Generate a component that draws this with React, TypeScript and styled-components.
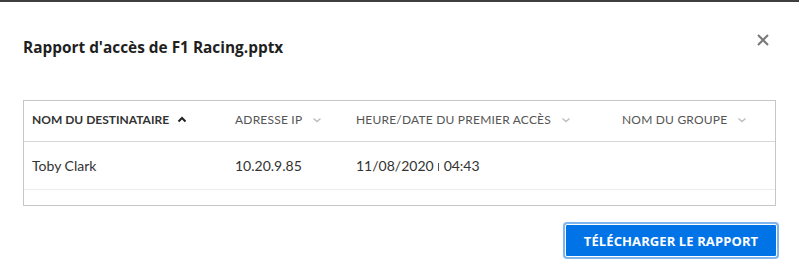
import React from 'react';
import styled, { createGlobalStyle } from 'styled-components';

const GlobalStyle = createGlobalStyle`
	html, body {
		margin: 0;
		padding: 0;
		background: #fff;
	}
	body {
		font-family: Lato, 'Liberation Sans', sans-serif;
		color: #222;
	}
`;

const Dialog = styled.div`
	width: 799px;
	height: 278px;
	box-sizing: border-box;
	border-top: 2px solid #3f3f3f;
	padding: 0 23px;
	display: flex;
	flex-direction: column;
`;

const Header = styled.div`
	display: flex;
	align-items: flex-start;
	justify-content: space-between;
	height: 98px;
`;

const Title = styled.h2`
	margin: 37px 0 0;
	font-family: 'Open Sans', Lato, sans-serif;
	font-size: 15.4px;
	font-weight: 700;
	color: #1f1f1f;
	line-height: 18px;
`;

const CloseButton = styled.button`
	margin: 31px 6px 0 0;
	width: 14px;
	height: 14px;
	padding: 0;
	border: none;
	background: none;
	display: flex;
	align-items: center;
	justify-content: center;
	cursor: pointer;
`;

const Table = styled.div`
	border: 1px solid #c6c6c6;
	height: 106px;
	box-sizing: border-box;
`;

const Row = styled.div<{ $head?: boolean }>`
	display: grid;
	grid-template-columns: 203px 121px 266px 1fr;
	height: ${(p) => (p.$head ? '41px' : '48px')};
	box-sizing: border-box;
	padding-bottom: ${(p) => (p.$head ? '4px' : '0')};
	border-bottom: 1px solid ${(p) => (p.$head ? '#d8d8d8' : '#ececec')};
	align-items: center;
`;

const HeadCell = styled.div<{ $active?: boolean }>`
	display: flex;
	align-items: center;
	gap: ${(p) => (p.$active ? '8px' : '10px')};
	padding-left: 8px;
	font-size: 12px;
	letter-spacing: ${(p) => (p.$active ? '0' : '0.2px')};
	text-transform: uppercase;
	font-weight: ${(p) => (p.$active ? 700 : 400)};
	color: ${(p) => (p.$active ? '#333' : '#555')};
`;

const Cell = styled.div`
	padding-left: 8px;
	font-size: 14px;
	color: #333;
	display: flex;
	align-items: center;
`;

const Divider = styled.span`
	display: inline-block;
	width: 1px;
	height: 8px;
	background: #555;
	margin: 3px 5px 0 4px;
`;

const Footer = styled.div`
	display: flex;
	justify-content: flex-end;
	padding-top: 18px;
`;

const DownloadButton = styled.button`
	width: 212px;
	height: 33px;
	margin-right: -1px;
	border: 1px solid #fff;
	background: #0073e7;
	color: #fff;
	font-family: 'Open Sans', Lato, sans-serif;
	font-weight: 700;
	font-size: 13px;
	letter-spacing: 0.1px;
	text-transform: uppercase;
	box-shadow: 0 0 0 2px #7fb6f0;
	border-radius: 2px;
	cursor: pointer;
`;

const Chevron = ({ up, dark }: { up?: boolean; dark?: boolean }) => (
	<svg width='10' height='7' viewBox='0 0 10 7'>
		<path
			d={up ? 'M1.5 5.5 L5 2 L8.5 5.5' : 'M1.5 2.5 L5 5.5 L8.5 2.5'}
			fill='none'
			stroke={dark ? '#222' : '#bdbdbd'}
			strokeWidth={dark ? 2 : 1.4}
		/>
	</svg>
);

const columns = [
	{ label: 'Nom du destinataire', active: true },
	{ label: 'Adresse IP' },
	{ label: 'Heure/date du premier accès' },
	{ label: 'Nom du groupe' }
];

const App = () => (
	<>
		<GlobalStyle />
		<Dialog>
			<Header>
				<Title>Rapport d'accès de F1 Racing.pptx</Title>
				<CloseButton aria-label='Fermer'>
					<svg width='12' height='12' viewBox='0 0 12 12'>
						<path d='M1 1 L11 11 M11 1 L1 11' stroke='#777' strokeWidth='2' />
					</svg>
				</CloseButton>
			</Header>
			<Table>
				<Row $head>
					{columns.map((c) => (
						<HeadCell key={c.label} $active={c.active}>
							{c.label}
							<Chevron up={c.active} dark={c.active} />
						</HeadCell>
					))}
				</Row>
				<Row>
					<Cell>Toby Clark</Cell>
					<Cell>10.20.9.85</Cell>
					<Cell>
						11/08/2020
						<Divider />
						04:43
					</Cell>
					<Cell />
				</Row>
			</Table>
			<Footer>
				<DownloadButton>Télécharger le rapport</DownloadButton>
			</Footer>
		</Dialog>
	</>
);

export default App;
